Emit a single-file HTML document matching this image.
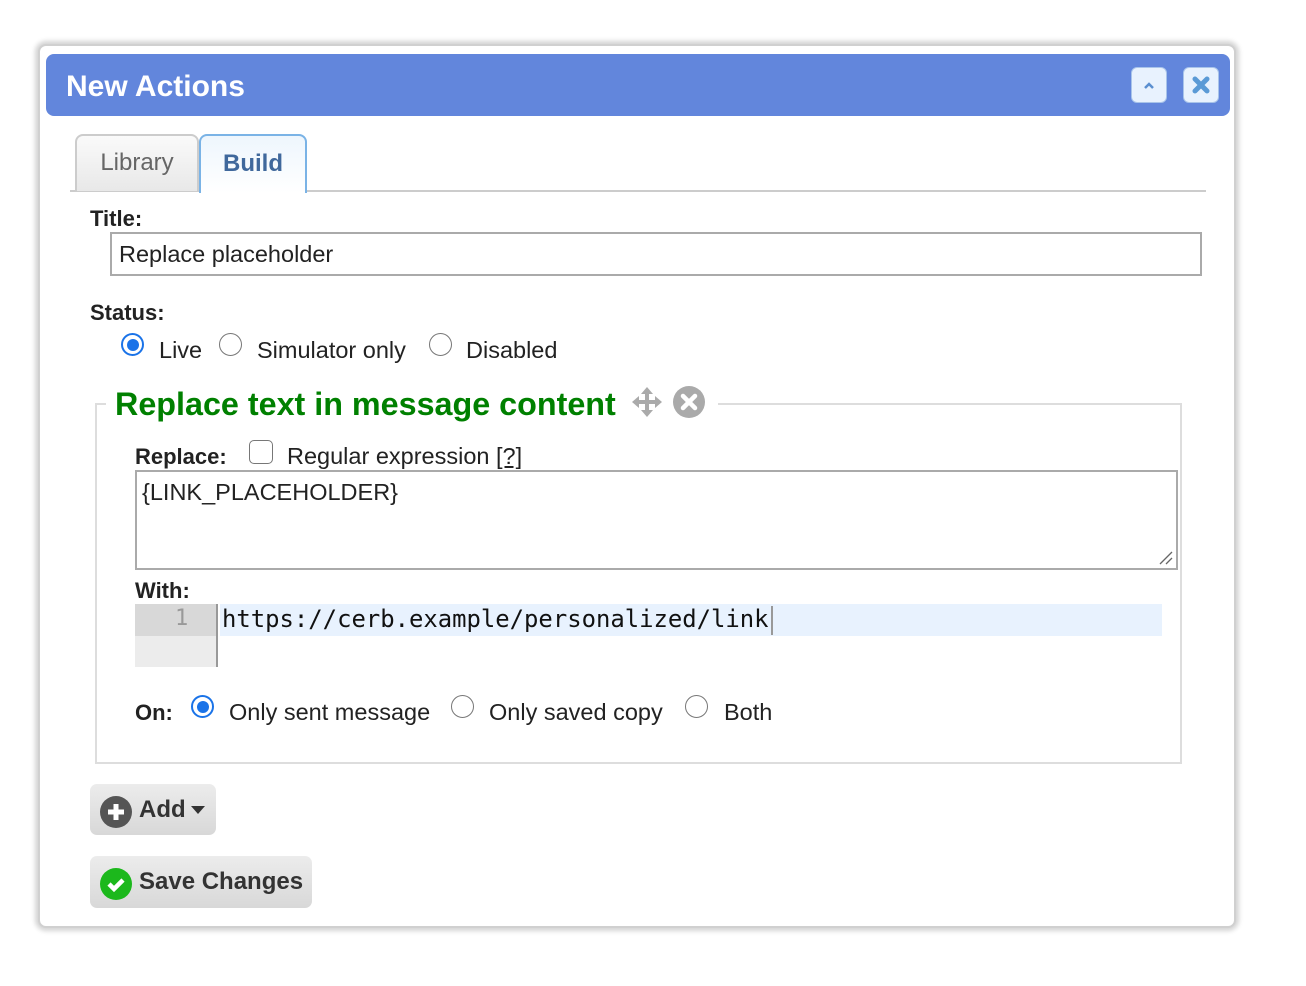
<!DOCTYPE html>
<html><head><style>
body{margin:0;width:1306px;height:986px;background:#fff;font-family:"Liberation Sans",sans-serif;position:relative;overflow:hidden}
.a{position:absolute;white-space:nowrap}
.dlg{left:38px;top:44px;width:1198px;height:884px;border:2px solid #d0d0d0;border-radius:8px;box-shadow:0 0 5px 3px #d4d4d4;background:#fff;box-sizing:border-box}
.hdr{left:46px;top:54px;width:1184px;height:62px;background:#6286dc;border-radius:8px}
.hb{width:36px;height:36px;top:67px;background:#e8f2fe;border:1px solid #a8c4ea;border-radius:6px;box-sizing:border-box}
.lbl{font-weight:bold;font-size:22px;color:#222}
.t{font-size:23.5px;color:#222}
.rad{width:23px;height:23px;border:1.5px solid #777;border-radius:50%;box-sizing:border-box;background:#fff}
.rad.on{border:2px solid #1a73e8}
.rad.on::after{content:"";position:absolute;left:3.5px;top:3.5px;width:12px;height:12px;border-radius:50%;background:#1a73e8}
.btn{background:linear-gradient(#ececec,#d8d8d8);border-radius:7px;font-weight:bold;font-size:24px;color:#333}
</style></head><body>
<div class="a dlg"></div>
<div class="a hdr"></div>
<div class="a" style="left:66px;top:70px;color:#fff;font-weight:bold;font-size:30px">New Actions</div>
<div class="a hb" style="left:1131px"><svg width="34" height="34"><path d="M13 20l4-4 4 4" fill="none" stroke="#5a8fd0" stroke-width="2.5"/></svg></div>
<div class="a hb" style="left:1183px"><svg width="34" height="34"><path d="M11 11l12 12M23 11L11 23" stroke="#5a9ad6" stroke-width="5" stroke-linecap="round"/></svg></div>
<div class="a" style="left:70px;top:190px;width:1136px;height:2px;background:#ccc"></div>
<div class="a" style="left:75px;top:134px;width:124px;height:57px;border:2px solid #ccc;border-bottom:none;border-radius:8px 8px 0 0;background:linear-gradient(#fafafa,#e8e8e8);box-sizing:border-box;font-size:24px;color:#666;text-align:center;line-height:54px">Library</div>
<div class="a" style="left:199px;top:134px;width:108px;height:59px;border:2px solid #7ab3e6;border-bottom:none;border-radius:8px 8px 0 0;background:linear-gradient(#eef6fd,#fff);box-sizing:border-box;font-size:24px;font-weight:bold;color:#40689c;text-align:center;line-height:56px">Build</div>
<div class="a lbl" style="left:90px;top:206px">Title:</div>
<div class="a" style="left:110px;top:232px;width:1092px;height:44px;border:2px solid #aaa;box-sizing:border-box"></div>
<div class="a t" style="left:119px;top:241px">Replace placeholder</div>
<div class="a lbl" style="left:90px;top:300px">Status:</div>
<div class="a rad on" style="left:121px;top:333px"></div><div class="a t" style="left:159px;top:337px">Live</div>
<div class="a rad" style="left:219px;top:333px"></div><div class="a t" style="left:257px;top:337px">Simulator only</div>
<div class="a rad" style="left:429px;top:333px"></div><div class="a t" style="left:466px;top:337px">Disabled</div>
<div class="a" style="left:95px;top:403px;width:1087px;height:361px;border:2px solid #ddd;box-sizing:border-box"></div>
<div class="a" style="left:106px;top:384px;width:612px;height:40px;background:#fff"></div>
<div class="a" style="left:115px;top:386px;color:#008000;font-weight:bold;font-size:32.3px">Replace text in message content</div>
<svg class="a" style="left:630px;top:385px" width="34" height="34" viewBox="0 0 34 34"><path d="M17 2l6 7h-4v6h6v-4l7 6-7 6v-4h-6v6h4l-6 7-6-7h4v-6H9v4l-7-6 7-6v4h6V9h-4z" fill="#aaa"/></svg>
<svg class="a" style="left:672px;top:385px" width="34" height="34"><circle cx="17" cy="17" r="16" fill="#aaa"/><path d="M11 11l12 12M23 11L11 23" stroke="#fff" stroke-width="4.5" stroke-linecap="round"/></svg>
<div class="a lbl" style="left:135px;top:444px">Replace:</div>
<div class="a" style="left:249px;top:440px;width:24px;height:24px;border:1.5px solid #777;border-radius:5px;box-sizing:border-box"></div>
<div class="a t" style="left:287px;top:443px">Regular expression <u>[?]</u></div>
<div class="a" style="left:135px;top:470px;width:1043px;height:100px;border:2px solid #aaa;box-sizing:border-box"></div>
<div class="a t" style="left:142px;top:479px">{LINK_PLACEHOLDER}</div>
<svg class="a" style="left:1158px;top:550px" width="16" height="16"><path d="M2 14L14 2M8 14l6-6" stroke="#666" stroke-width="1.3"/></svg>
<div class="a lbl" style="left:135px;top:578px">With:</div>
<div class="a" style="left:135px;top:604px;width:81px;height:32px;background:#d8d8d8"></div>
<div class="a" style="left:135px;top:636px;width:81px;height:31px;background:#ececec"></div>
<div class="a" style="left:216px;top:604px;width:2px;height:63px;background:#999"></div>
<div class="a" style="left:220px;top:604px;width:942px;height:32px;background:#e8f2fe"></div>
<div class="a" style="left:175px;top:606px;font-family:'DejaVu Sans Mono',monospace;font-size:22px;color:#999">1</div>
<div class="a" style="left:222px;top:605px;font-family:'DejaVu Sans Mono',monospace;font-size:23.9px;color:#111">https://cerb.example/personalized/link</div>
<div class="a" style="left:771px;top:606px;width:2px;height:29px;background:#999"></div>
<div class="a lbl" style="left:135px;top:700px">On:</div>
<div class="a rad on" style="left:191px;top:695px"></div><div class="a t" style="left:229px;top:699px">Only sent message</div>
<div class="a rad" style="left:451px;top:695px"></div><div class="a t" style="left:489px;top:699px">Only saved copy</div>
<div class="a rad" style="left:685px;top:695px"></div><div class="a t" style="left:724px;top:699px">Both</div>
<div class="a btn" style="left:90px;top:784px;width:126px;height:51px"></div>
<svg class="a" style="left:100px;top:796px" width="32" height="32"><circle cx="16" cy="16" r="16" fill="#555"/><path d="M16 8v16M8 16h16" stroke="#fff" stroke-width="5"/></svg>
<div class="a btn" style="left:139px;top:796px;background:none">Add</div>
<svg class="a" style="left:191px;top:806px" width="14" height="8"><path d="M0 0h14L7 8z" fill="#333"/></svg>
<div class="a btn" style="left:90px;top:856px;width:222px;height:52px"></div>
<svg class="a" style="left:100px;top:868px" width="32" height="32"><circle cx="16" cy="16" r="16" fill="#1cb81c"/><path d="M9 16l5 5 9-9" fill="none" stroke="#fff" stroke-width="4.5"/></svg>
<div class="a btn" style="left:139px;top:868px;background:none">Save Changes</div>
</body></html>
